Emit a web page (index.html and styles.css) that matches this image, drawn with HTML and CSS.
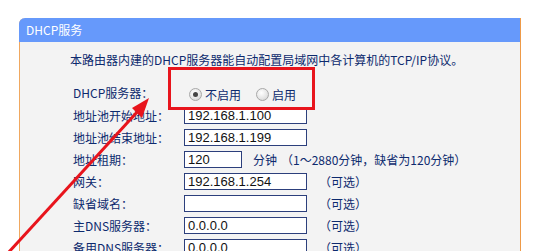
FILE: index.html
```html
<!DOCTYPE html>
<html lang="zh-CN">
<head>
    <meta charset="UTF-8">
    <title>DHCP服务</title>
    <link rel="stylesheet" href="styles.css">
</head>
<body>
    <div class="panel">
        <div class="panel-title">DHCP服务</div>
        <div class="panel-body">
            <p class="intro">本路由器内建的DHCP服务器能自动配置局域网中各计算机的TCP/IP协议。</p>
            <div class="form-grid">
                <div class="label row-tall">DHCP服务器：</div>
                <div class="value row-tall">
                    <label class="radio"><input type="radio" name="dhcp" checked> 不启用</label>
                    <label class="radio"><input type="radio" name="dhcp"> 启用</label>
                </div>

                <div class="label">地址池开始地址：</div>
                <div class="value"><input class="field" type="text" value="192.168.1.100"></div>

                <div class="label">地址池结束地址：</div>
                <div class="value"><input class="field" type="text" value="192.168.1.199"></div>

                <div class="label">地址租期：</div>
                <div class="value">
                    <input class="field short" type="text" value="120">
                    <span class="unit">分钟</span>
                    <span class="hint">（1～2880分钟，缺省为120分钟）</span>
                </div>

                <div class="label">网关：</div>
                <div class="value"><input class="field" type="text" value="192.168.1.254"><span class="optional">（可选）</span></div>

                <div class="label">缺省域名：</div>
                <div class="value"><input class="field" type="text" value=""><span class="optional">（可选）</span></div>

                <div class="label">主DNS服务器：</div>
                <div class="value"><input class="field" type="text" value="0.0.0.0"><span class="optional">（可选）</span></div>

                <div class="label">备用DNS服务器：</div>
                <div class="value"><input class="field" type="text" value="0.0.0.0"><span class="optional">（可选）</span></div>
            </div>
        </div>
    </div>

    <!-- annotation drawn over the screenshot -->
    <svg class="markup" width="553" height="251" viewBox="0 0 553 251">
        <rect x="169.5" y="68.5" width="144" height="40" fill="none" stroke="#e8141c" stroke-width="3"/>
        <line x1="8" y1="253" x2="139" y2="110" stroke="#e8141c" stroke-width="3"/>
        <polygon points="149,98 132,108 142,118" fill="#e8141c"/>
    </svg>
</body>
</html>
```

FILE: styles.css
```css
body {
    margin: 0;
    padding: 18px 0 0 19px;
    background-color: #ffffff;
    font-family: "Noto Sans CJK SC", "Liberation Sans", sans-serif;
    font-size: 12px;
    color: #0d2a6e;
    position: relative;
    overflow: hidden;
    height: 233px;
}
.panel {
    width: 500px;
    border-left: 1px solid #f0a860;
    border-right: 1px solid #ee9a48;
    border-top-left-radius: 6px;
    background-color: #f3f3f3;
    height: 260px;
}
.panel-title {
    height: 24px;
    line-height: 24px;
    background-color: #6699fb;
    color: #ffffff;
    border-top-left-radius: 6px;
    margin-left: -1px;
    padding-left: 7px;
}
.panel-body {
    padding-left: 50px;
}
.intro {
    margin: 8px 0 12px 0;
    height: 20px;
    line-height: 20px;
}
.form-grid {
    display: grid;
    grid-template-columns: 114px 1fr;
    grid-auto-rows: 22px;
}
.label {
    padding-left: 3px;
    display: flex;
    align-items: center;
}
.value {
    display: flex;
    align-items: center;
}
.row-tall {
    height: 24px;
    margin-top: -2px;
}
.radio {
    display: inline-flex;
    align-items: center;
    margin-right: 10px;
    margin-left: 5px;
    margin-top: 4px;
}
.radio input {
    appearance: none;
    -webkit-appearance: none;
    width: 13px;
    height: 13px;
    margin: 0 3px 0 0;
    border-radius: 50%;
    border: 1px solid #a8a8a8;
    background: radial-gradient(circle at 40% 35%, #ffffff 0%, #e4e4e4 60%, #c8c8c8 100%);
    position: relative;
}
.radio input:checked::after {
    content: '';
    position: absolute;
    left: 3px;
    top: 3px;
    width: 5px;
    height: 5px;
    border-radius: 50%;
    background-color: #444444;
}
.field {
    box-sizing: border-box;
    width: 123px;
    height: 17px;
    border: 1px solid #2c3f7c;
    background-color: #ffffff;
    padding: 0 3px;
    margin: 0;
    font-family: "Liberation Sans", Arial, sans-serif;
    font-size: 13px;
    color: #111111;
}
.field.short {
    width: 58px;
}
.unit {
    margin-left: 11px;
}
.hint {
    margin-left: 4px;
}
.optional {
    margin-left: 12px;
}
.markup {
    position: absolute;
    left: 0;
    top: 0;
    pointer-events: none;
}
```
